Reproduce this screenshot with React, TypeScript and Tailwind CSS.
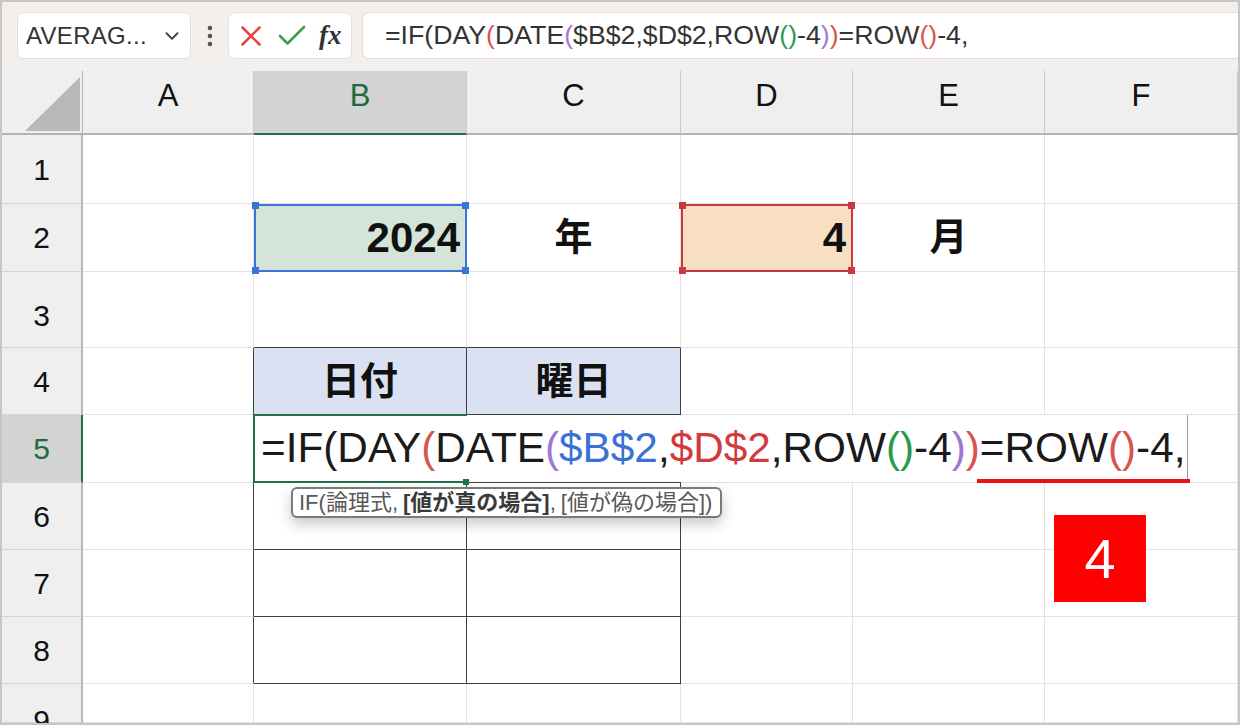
import { ChevronDown, X, Check } from "lucide-react";
import type { ReactNode } from "react";

type Seg = [string, string];

const cellSegs: Seg[] = [
  ["=IF(DAY", "text-[#1a1a1a]"],
  ["(", "text-[#d9534f]"],
  ["DATE", "text-[#1a1a1a]"],
  ["(", "text-[#a078d4]"],
  ["$B$2", "text-[#3b70d6]"],
  [",", "text-[#1a1a1a]"],
  ["$D$2", "text-[#d23b3b]"],
  [",ROW", "text-[#1a1a1a]"],
  ["()", "text-[#2c9a4c]"],
  ["-4", "text-[#1a1a1a]"],
  [")", "text-[#a078d4]"],
  [")", "text-[#d9534f]"],
  ["=ROW", "text-[#1a1a1a]"],
  ["()", "text-[#d9534f]"],
  ["-4,", "text-[#1a1a1a]"],
];

const barSegs: Seg[] = [
  ["=IF(DAY", "text-[#333]"],
  ["(", "text-[#d9534f]"],
  ["DATE", "text-[#333]"],
  ["(", "text-[#a078d4]"],
  ["$B$2,$D$2,ROW", "text-[#333]"],
  ["()", "text-[#2c9a4c]"],
  ["-4", "text-[#333]"],
  [")", "text-[#a078d4]"],
  [")", "text-[#d9534f]"],
  ["=ROW", "text-[#333]"],
  ["()", "text-[#d9534f]"],
  ["-4,", "text-[#333]"],
];

const COLS = ["A", "B", "C", "D", "E", "F"];
const ROWS = [1, 2, 3, 4, 5, 6, 7, 8, 9];

function Formula({ segs }: { segs: Seg[] }) {
  return (
    <>
      {segs.map(([t, c], i) => (
        <span key={i} className={c}>
          {t}
        </span>
      ))}
    </>
  );
}

function FormulaBar() {
  return (
    <div className="h-[69px] shrink-0 bg-[#f3efed] flex items-start pt-[10px] pl-[15px]">
      <div className="w-[174px] h-[47px] bg-white rounded-[7px] border border-[#e4dfdc] flex items-center justify-between pl-[8px] pr-[7px]">
        <span className="text-[24px] text-[#333] tracking-[0.3px]">AVERAG...</span>
        <ChevronDown size={22} strokeWidth={2} className="text-[#444]" />
      </div>
      <div className="w-[37px] h-[47px] flex items-center justify-center">
        <svg width="6" height="22" viewBox="0 0 6 22">
          <circle cx="3" cy="3" r="2.3" fill="#555" />
          <circle cx="3" cy="11" r="2.3" fill="#555" />
          <circle cx="3" cy="19" r="2.3" fill="#555" />
        </svg>
      </div>
      <div className="w-[124px] h-[47px] bg-white rounded-[7px] border border-[#e4dfdc] flex items-center pl-[5px]">
        <X size={34} strokeWidth={1.8} className="text-[#e8433f]" />
        <Check size={36} strokeWidth={1.8} className="text-[#3aa35a] ml-[6px]" />
        <span className="ml-[9px] font-['Liberation_Serif',serif] italic font-bold text-[27px] text-[#333] leading-none">
          fx
        </span>
      </div>
      <div className="ml-[10px] flex-1 h-[47px] bg-white rounded-l-[7px] border border-r-0 border-[#e4dfdc] flex items-center pl-[22px] text-[26.7px] whitespace-nowrap">
        <Formula segs={barSegs} />
      </div>
    </div>
  );
}

function Handles({ color }: { color: string }) {
  return (
    <>
      <span className={`absolute -left-[4px] -top-[4px] w-[7px] h-[7px] ${color}`} />
      <span className={`absolute -right-[4px] -top-[4px] w-[7px] h-[7px] ${color}`} />
      <span className={`absolute -left-[4px] -bottom-[4px] w-[7px] h-[7px] ${color}`} />
      <span className={`absolute -right-[4px] -bottom-[4px] w-[7px] h-[7px] ${color}`} />
    </>
  );
}

function cellBorder(r: number, c: string) {
  const bc = c === "B" || c === "C";
  if (bc && r >= 4 && r <= 8) return "border-r border-b border-[#404040]";
  if (bc && r === 3) return "border-r border-b border-r-[#e1e1e1] border-b-[#404040]";
  if (c === "A" && r >= 4 && r <= 8) return "border-r border-b border-r-[#404040] border-b-[#e1e1e1]";
  return "border-r border-b border-[#e1e1e1]";
}

function cellContent(r: number, c: string): { cls: string; node: ReactNode } {
  const key = `${c}${r}`;
  switch (key) {
    case "B2":
      return {
        cls: "relative bg-[#d4e4d8] flex items-center justify-end pr-[6px] text-[42px] font-bold",
        node: (
          <>
            2024
            <div className="absolute left-0 top-0 -right-[1px] -bottom-[1px] border-2 border-[#3a74d4] z-10">
              <Handles color="bg-[#3a74d4]" />
            </div>
          </>
        ),
      };
    case "C2":
      return { cls: "flex items-center justify-center text-[38px] font-bold", node: "年" };
    case "D2":
      return {
        cls: "relative bg-[#f9dfc1] flex items-center justify-end pr-[6px] text-[42px] font-bold",
        node: (
          <>
            4
            <div className="absolute left-0 top-0 -right-[1px] -bottom-[1px] border-2 border-[#c9393f] z-10">
              <Handles color="bg-[#c9393f]" />
            </div>
          </>
        ),
      };
    case "E2":
      return { cls: "flex items-center justify-center text-[38px] font-bold", node: "月" };
    case "B4":
      return { cls: "bg-[#d9e1f2] flex items-center justify-center text-[38px] font-bold", node: "日付" };
    case "C4":
      return { cls: "bg-[#d9e1f2] flex items-center justify-center text-[38px] font-bold", node: "曜日" };
    case "B5":
      return {
        cls: "relative",
        node: (
          <>
            <div className="absolute left-0 top-0 bottom-0 w-[934px] z-10 bg-white border-r border-[#9a9a9a] flex items-center pl-[7px] text-[42.3px] leading-none whitespace-nowrap">
              <Formula segs={cellSegs} />
            </div>
            <div className="absolute -left-[1px] -top-[1px] w-[214px] -bottom-[1px] z-20 border-l-2 border-t-2 border-b-2 border-[#217346]" />
            <div className="absolute left-[209px] -bottom-[3px] w-[6px] h-[6px] bg-[#217346] z-20" />
            <div className="absolute left-[723px] top-[64px] w-[213px] h-[4px] bg-[#ee1111] z-30" />
          </>
        ),
      };
    case "B6":
      return {
        cls: "relative",
        node: (
          <div className="absolute left-[37px] top-[4px] w-[431px] h-[31px] z-30 bg-white border-2 border-[#7a7a7a] rounded-[6px] shadow-[0_6px_14px_rgba(0,0,0,0.22)] flex items-center pl-[6px] text-[22px] text-[#585858] whitespace-nowrap leading-none">
            IF(論理式, <b className="font-bold text-[#3a3a3a] ml-[5px]">[値が真の場合]</b>, <span className="ml-[5px]">[値が偽の場合])</span>
          </div>
        ),
      };
    case "F6":
      return {
        cls: "relative",
        node: (
          <div className="absolute left-[9px] top-[32px] w-[92px] h-[87px] z-10 bg-[#ff0000] flex items-center justify-center text-white text-[56px] leading-none">
            4
          </div>
        ),
      };
    default:
      return { cls: "", node: null };
  }
}

function Sheet() {
  return (
    <div className="grid grid-cols-[81px_171px_213px_214px_172px_192px_193px] grid-rows-[64px_69px_68px_76px_67px_68px_67px_67px_67px_39px] flex-1 min-h-0">
      <div className="bg-[#efefef] border-r border-r-[#b3b3b3] border-b-2 border-b-[#b3b3b3] flex items-end justify-end pr-[2px] pb-[2px]">
        <svg width="55" height="54" viewBox="0 0 55 54">
          <polygon points="0,54 55,0 55,54" fill="#b8b8b8" />
        </svg>
      </div>
      {COLS.map((c) =>
        c === "B" ? (
          <div
            key={c}
            className="bg-[#d3d3d3] border-r border-r-[#c8c8c8] border-b-2 border-b-[#1f7244] flex items-center justify-center pb-[11px] text-[31px] text-[#1d6b3f]"
          >
            {c}
          </div>
        ) : (
          <div
            key={c}
            className="bg-[#efefef] border-r border-r-[#c8c8c8] border-b-2 border-b-[#b3b3b3] flex items-center justify-center pb-[11px] text-[31px] text-[#111]"
          >
            {c}
          </div>
        )
      )}
      {ROWS.map((r) => (
        <RowCells key={r} r={r} />
      ))}
    </div>
  );
}

function RowCells({ r }: { r: number }) {
  const head =
    r === 5
      ? "bg-[#d3d3d3] text-[#1d6b3f] border-r-2 border-r-[#1f7244]"
      : "bg-[#efefef] text-[#111] border-r-2 border-r-[#b8b8b8]";
  return (
    <>
      <div
        className={`${head} border-b border-b-[#d5d5d5] flex justify-center text-[30px] ${
          r === 3 ? "items-center pt-[12px]" : r === 9 ? "items-start pt-[14px]" : "items-center"
        }`}
      >
        {r}
      </div>
      {COLS.map((c) => {
        const { cls, node } = cellContent(r, c);
        return (
          <div key={c} className={`${cellBorder(r, c)} ${cls}`}>
            {node}
          </div>
        );
      })}
    </>
  );
}

export default function App() {
  return (
    <div className="w-[1240px] h-[725px] overflow-hidden border-2 border-[#c6c6c6] bg-white font-['Liberation_Sans','Noto_Sans_CJK_JP',sans-serif] text-[#111] flex flex-col">
      <FormulaBar />
      <Sheet />
    </div>
  );
}
